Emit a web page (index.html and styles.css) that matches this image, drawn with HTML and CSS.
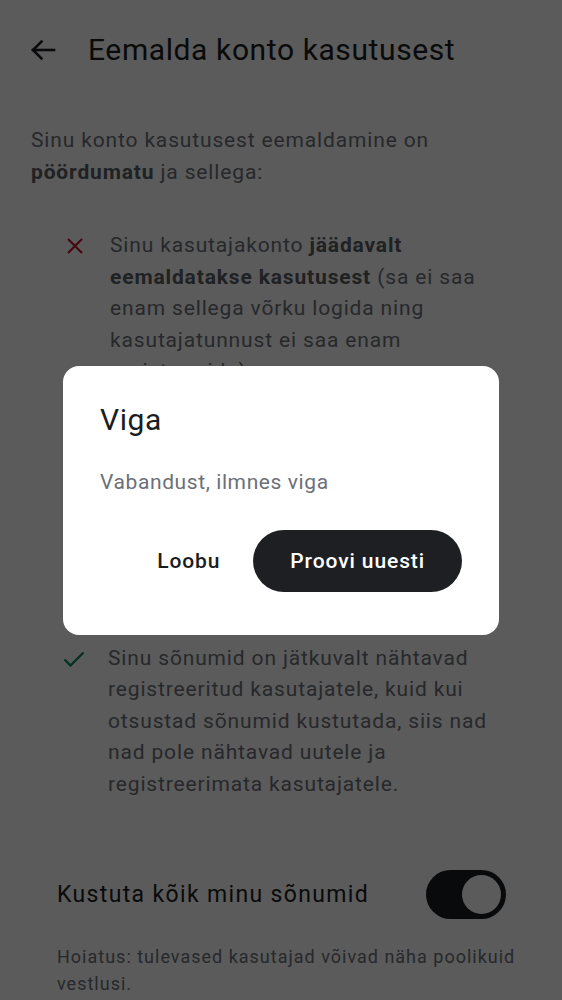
FILE: index.html
```html
<!DOCTYPE html>
<html lang="et">
<head>
<meta charset="utf-8">
<title>Eemalda konto kasutusest</title>
<link rel="stylesheet" href="styles.css">
</head>
<body>
<div class="page">
  <header class="topbar">
    <button class="back" aria-label="Tagasi">
      <svg width="26" height="22" viewBox="0 0 26 22" fill="none" stroke="currentColor" stroke-width="2.6" stroke-linecap="square">
        <path d="M24 11H3"/>
        <path d="M11.5 2.5L3 11l8.5 8.5"/>
      </svg>
    </button>
    <h1 class="title">Eemalda konto kasutusest</h1>
  </header>

  <main class="content">
    <p class="intro">Sinu konto kasutusest eemaldamine on <b>pöördumatu</b> ja sellega:</p>

    <ul class="points">
      <li class="point">
        <svg class="icon icon-no" width="18" height="18" viewBox="0 0 18 18" fill="none" stroke="currentColor" stroke-width="2.2"><path d="M2 2l14 14M16 2L2 16"/></svg>
        <span>Sinu kasutajakonto <b>jäädavalt eemaldatakse kasutusest</b> (sa ei saa enam sellega võrku logida ning kasutajatunnust ei saa enam registreerida).</span>
      </li>
      <li class="point">
        <svg class="icon icon-no" width="18" height="18" viewBox="0 0 18 18" fill="none" stroke="currentColor" stroke-width="2.2"><path d="M2 2l14 14M16 2L2 16"/></svg>
        <span>Sinu isikuandmed <b>kustutatakse jäädavalt</b> meie serveritest ning neid ei ole hiljem võimalik taastada ega uuesti kasutada, isegi kui sa seda soovid. Kõik sinu seaded ja eelistused lähevad samuti kaduma.</span>
      </li>
      <li class="point">
        <svg class="icon icon-ok" width="22" height="16" viewBox="0 0 22 16" fill="none" stroke="currentColor" stroke-width="2.4"><path d="M1.5 8.5l6 6L20.5 1.5"/></svg>
        <span>Sinu sõnumid on jätkuvalt nähtavad registreeritud kasutajatele, kuid kui otsustad sõnumid kustutada, siis nad nad pole nähtavad uutele ja registreerimata kasutajatele.</span>
      </li>
    </ul>

    <section class="setting">
      <div class="setting-row">
        <span class="setting-label">Kustuta kõik minu sõnumid</span>
        <span class="toggle on" role="switch" aria-checked="true"><span class="thumb"></span></span>
      </div>
      <p class="setting-hint">Hoiatus: tulevased kasutajad võivad näha poolikuid vestlusi.</p>
    </section>
  </main>
</div>

<div class="scrim">
  <div class="dialog" role="alertdialog">
    <h2 class="dialog-title">Viga</h2>
    <p class="dialog-text">Vabandust, ilmnes viga</p>
    <div class="dialog-actions">
      <button class="btn btn-text">Loobu</button>
      <button class="btn btn-filled">Proovi uuesti</button>
    </div>
  </div>
</div>
</body>
</html>
```

FILE: styles.css
```css
* { box-sizing: border-box; }

html, body {
  margin: 0;
  padding: 0;
  background: #ffffff;
}

body {
  font-family: Roboto, "Noto Sans", "Liberation Sans", sans-serif;
  color: #1b1c20;
  width: 562px;
  height: 1000px;
  overflow: hidden;
}

.page {
  width: 100%;
}

.topbar {
  height: 100px;
  display: flex;
  align-items: center;
  padding-left: 30px;
}

.back {
  border: 0;
  background: none;
  padding: 0;
  width: 26px;
  height: 22px;
  color: #1b1c20;
  display: flex;
  margin-right: 32px;
}

.title {
  margin: 0;
  font-size: 30px;
  font-weight: 400;
  line-height: 36px;
  letter-spacing: 0.6px;
  color: #1b1c20;
}

.content {
  padding: 24px 31px 0;
}

.intro {
  margin: 0;
  font-size: 21px;
  line-height: 32px;
  letter-spacing: 0.85px;
  color: #6e7179;
}

.intro b, .point b {
  font-weight: 700;
  color: #5a5d64;
}

.points {
  list-style: none;
  margin: 42px 0 0;
  padding: 0 36px 0 34px;
  display: flex;
  flex-direction: column;
  gap: 33px;
}

.point {
  display: flex;
  align-items: flex-start;
  gap: 26px;
  font-size: 21px;
  line-height: 31.5px;
  letter-spacing: 0.85px;
  color: #6e7179;
}

.icon {
  flex: none;
  margin-top: 7px;
}

.icon-no {
  color: #c0182f;
  margin-left: 1px;
}

.icon-ok {
  color: #138a62;
  margin-left: -2px;
  margin-right: -3px;
  margin-top: 8px;
}

.setting {
  margin-top: 70px;
  padding: 0 10px 0 26px;
}

.setting-row {
  display: flex;
  align-items: center;
  justify-content: space-between;
}

.setting-label {
  font-size: 23px;
  letter-spacing: 1.35px;
  color: #1b1c20;
}

.toggle {
  width: 80px;
  height: 49px;
  margin-right: 15px;
  border-radius: 25px;
  background: #1b1c20;
  display: flex;
  align-items: center;
  justify-content: flex-end;
  padding-right: 5px;
}

.thumb {
  width: 39px;
  height: 39px;
  border-radius: 50%;
  background: #ffffff;
}

.setting-hint {
  margin: 24px 0 0;
  font-size: 18px;
  line-height: 27px;
  letter-spacing: 1px;
  color: #6e7179;
}

.scrim {
  position: fixed;
  inset: 0;
  background: rgba(0, 0, 0, 0.643);
  display: flex;
  align-items: center;
  justify-content: center;
}

.dialog {
  width: 436px;
  height: 269px;
  background: #ffffff;
  border-radius: 16px;
  padding: 36px 37px 0 37px;
}

.dialog-title {
  margin: 0;
  font-size: 30px;
  font-weight: 400;
  line-height: 36px;
  letter-spacing: 0.6px;
  color: #1b1c20;
}

.dialog-text {
  margin: 30px 0 0;
  font-size: 21px;
  line-height: 28px;
  color: #6b7079;
  letter-spacing: 0.6px;
}

.dialog-actions {
  margin-top: 34px;
  display: flex;
  justify-content: flex-end;
  align-items: center;
  gap: 9px;
}

.btn {
  font-family: inherit;
  font-size: 21px;
  font-weight: 500;
  border: 0;
  height: 62px;
  border-radius: 31px;
  letter-spacing: 0.9px;
}

.btn-text {
  background: none;
  color: #1b1c20;
  padding: 0 24px;
}

.btn-filled {
  background: #1e1f23;
  color: #ffffff;
  padding: 0 37px;
}
```
